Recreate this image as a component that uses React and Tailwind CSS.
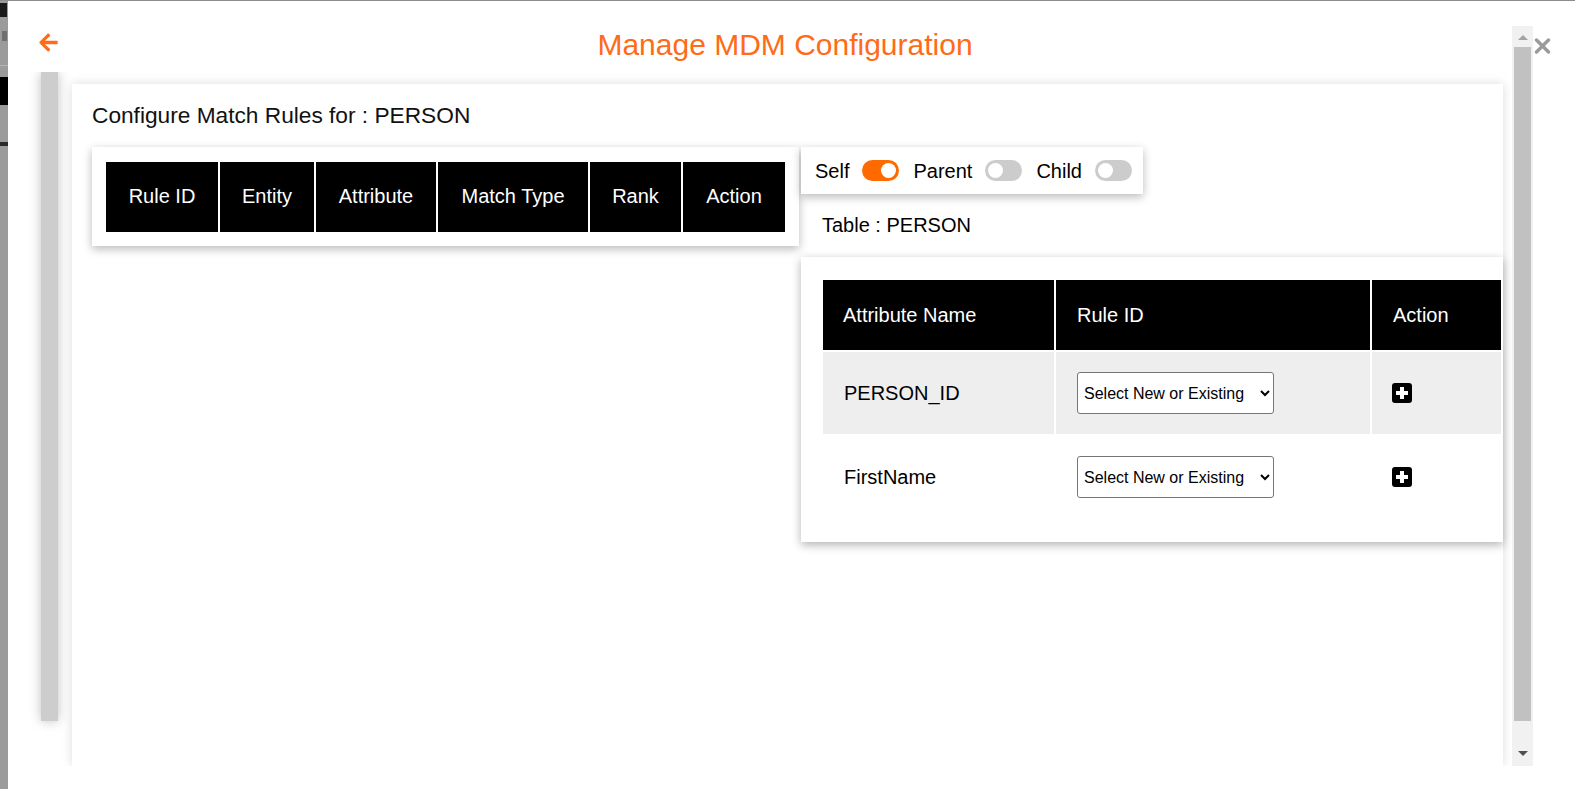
import React from 'react';
import { FaArrowLeft } from 'react-icons/fa';

const ruleCols = [
  { label: 'Rule ID', w: 'w-[112px]' },
  { label: 'Entity', w: 'w-[94px]' },
  { label: 'Attribute', w: 'w-[120px]' },
  { label: 'Match Type', w: 'w-[150px]' },
  { label: 'Rank', w: 'w-[91px]' },
  { label: 'Action', w: 'w-[102px]' },
];

const attrRows = [
  { name: 'PERSON_ID', bg: 'bg-[#eeeeee]' },
  { name: 'FirstName', bg: 'bg-white' },
];

function Toggle({ on }) {
  return (
    <span
      className={
        on
          ? 'w-[37px] h-[21px] rounded-full bg-[#ff6a00] flex items-center justify-end px-[3px]'
          : 'w-[37px] h-[21px] rounded-full bg-[#cccccc] flex items-center justify-start px-[3px]'
      }
    >
      <span className="w-[15px] h-[15px] rounded-full bg-white" />
    </span>
  );
}

function PlusBox() {
  return (
    <svg width="20" height="20" viewBox="0 0 20 20">
      <rect x="0" y="0" width="20" height="20" rx="3" fill="#000" />
      <rect x="4" y="8" width="12" height="4" fill="#fff" />
      <rect x="8" y="4" width="4" height="12" fill="#fff" />
    </svg>
  );
}

function RuleSelect() {
  return (
    <select
      defaultValue=""
      className="h-[42px] w-[197px] border border-[#767676] rounded-[3px] bg-white text-[16px] text-black pl-[2px]"
    >
      <option value="">Select New or Existing</option>
      <option value="new">New</option>
    </select>
  );
}

export default function App() {
  return (
    <div className="w-[1575px] h-[789px] flex bg-[#8d8d8d] pt-px overflow-hidden font-['Liberation_Sans',Arial,sans-serif] text-black">
      {/* page behind the overlay */}
      <div className="w-[8px] flex flex-col bg-[#9b9b9b]">
        <div className="mt-[2px] h-[14px] w-[7px] bg-[#1a1a1a]" />
        <div className="mt-[14px] h-[10px] w-[5px] ml-[2px] bg-[#6f6f6f]" />
        <div className="mt-[24px] h-px bg-[#b4b4b4]" />
        <div className="mt-[11px] h-[28px] bg-black" />
        <div className="mt-[37px] h-[4px] bg-[#2a2a2a]" />
      </div>

      {/* modal */}
      <div className="flex-1 bg-white flex flex-col pt-[25px]">
        <div className="flex h-[740px]">
          {/* scroll content */}
          <div className="flex-1 flex flex-col overflow-hidden">
            <div className="h-[46px] flex items-start">
              <div className="w-[50px] pl-[30px] pt-[6px] text-[#ff6b17]">
                <FaArrowLeft size={21} />
              </div>
              <div className="flex-1 text-center text-[30px] leading-[34px] pt-[2px] text-[#ff6b17]">
                Manage MDM Configuration
              </div>
            </div>

            <div className="flex-1 flex items-start pl-[33px] overflow-hidden">
              <div className="w-[17px] h-[649px] bg-[#cdcdcd] shadow-[0_0_12px_rgba(0,0,0,0.25)]" />

              <div className="flex-1 ml-[14px] mr-[9px] mt-[12px] h-[682px] bg-white shadow-[0_0_10px_rgba(0,0,0,0.14)] pl-[20px] pt-[18px]">
                <div className="text-[22.7px] leading-[27px] text-[#111]">Configure Match Rules for : PERSON</div>

                <div className="flex items-start mt-[18px]">
                  <div className="w-[707px] bg-white px-[14px] pt-[15px] pb-[14px] shadow-[0_3px_9px_rgba(0,0,0,0.28)]">
                    <div className="flex gap-[2px]">
                      {ruleCols.map((c) => (
                        <div
                          key={c.label}
                          className={`${c.w} h-[70px] bg-black text-white text-[20px] flex items-center justify-center pb-[2px]`}
                        >
                          {c.label}
                        </div>
                      ))}
                    </div>
                  </div>

                  <div className="flex-1 ml-[2px] flex flex-col">
                    <div className="w-[342px] h-[47px] bg-white flex items-center pl-[14px] text-[20px] shadow-[0_3px_9px_rgba(0,0,0,0.28)]">
                      <span className="mr-[13px]">Self</span>
                      <Toggle on />
                      <span className="ml-[14px] mr-[13px]">Parent</span>
                      <Toggle />
                      <span className="ml-[14px] mr-[13px]">Child</span>
                      <Toggle />
                    </div>

                    <div className="mt-[19px] pl-[21px] text-[20px] leading-[24px]">Table : PERSON</div>

                    <div className="mt-[20px] bg-white pl-[22px] pr-[2px] pt-[23px] pb-[24px] shadow-[0_3px_9px_rgba(0,0,0,0.3)]">
                      <div className="flex flex-col gap-[2px]">
                        <div className="flex gap-[2px] text-white text-[20px]">
                          <div className="w-[231px] h-[70px] bg-black flex items-center pl-[20px]">Attribute Name</div>
                          <div className="w-[314px] h-[70px] bg-black flex items-center pl-[21px]">Rule ID</div>
                          <div className="w-[129px] h-[70px] bg-black flex items-center pl-[21px]">Action</div>
                        </div>
                        {attrRows.map((r) => (
                          <div key={r.name} className="flex gap-[2px] text-[20px]">
                            <div className={`w-[231px] h-[82px] ${r.bg} flex items-center pl-[21px]`}>{r.name}</div>
                            <div className={`w-[314px] h-[82px] ${r.bg} flex items-center pl-[21px]`}>
                              <RuleSelect />
                            </div>
                            <div className={`w-[129px] h-[82px] ${r.bg} flex items-center pl-[20px]`}>
                              <PlusBox />
                            </div>
                          </div>
                        ))}
                      </div>
                    </div>
                  </div>
                </div>
              </div>
            </div>
          </div>

          {/* scrollbar */}
          <div className="w-[21px] bg-[#f1f1f1] flex flex-col items-center">
            <div className="h-[21px] flex items-center justify-center pt-[2px]">
              <span className="w-0 h-0 border-l-[5px] border-r-[5px] border-b-[5px] border-l-transparent border-r-transparent border-b-[#a3a3a3]" />
            </div>
            <div className="w-[17px] h-[674px] bg-[#c1c1c1]" />
            <div className="flex-1 flex items-end pb-[10px]">
              <span className="w-0 h-0 border-l-[5px] border-r-[5px] border-t-[5px] border-l-transparent border-r-transparent border-t-[#505050]" />
            </div>
          </div>

          {/* close */}
          <div className="w-[42px] pl-[1px] pt-[12px]">
            <svg width="17" height="16" viewBox="0 0 17 16">
              <path d="M2.5 2 L14.5 14 M14.5 2 L2.5 14" stroke="#9a9a9a" strokeWidth="3.4" strokeLinecap="round" />
            </svg>
          </div>
        </div>
      </div>
    </div>
  );
}
